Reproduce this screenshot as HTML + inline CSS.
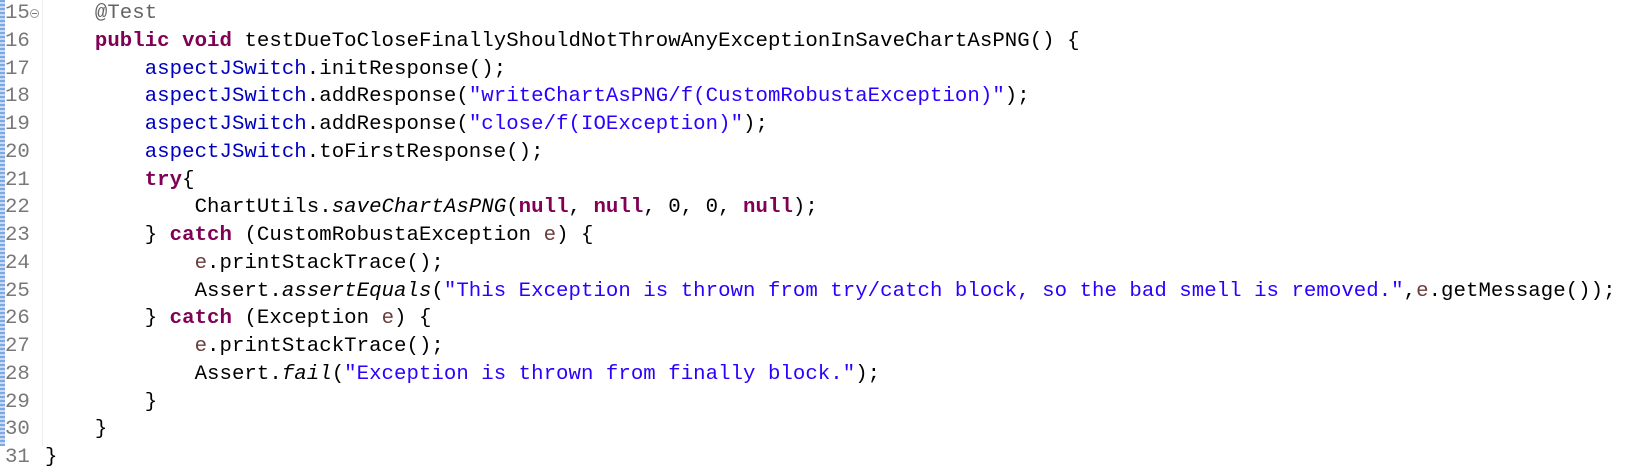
<!DOCTYPE html>
<html><head><style>
html,body{margin:0;padding:0;background:#fff;width:1631px;height:446px;overflow:hidden}
.strip{position:absolute;left:0;top:0;width:5px;height:446px;background:repeating-linear-gradient(0deg,#7fa8e0 0 2px,#c8daf5 2px 4px)}
.sep{position:absolute;left:42px;top:0;width:1px;height:446px;background:#eeeeee}
.code{position:absolute;left:0;top:0px;font-family:"Liberation Mono",monospace;font-size:20.7px;letter-spacing:0.05px;white-space:pre;color:#000}
.code div{height:27.75px;line-height:27.75px;position:relative}
.ln{display:inline-block;width:45px;color:#787878;padding-left:5px;box-sizing:border-box;position:relative;letter-spacing:0}
.k{color:#7f0055;font-weight:bold}.f{color:#0000c0}.s{color:#2a00ff}.a{color:#646464}.v{color:#6a3e3e}.i{font-style:italic}
.fold{position:absolute;left:30px;top:9px;width:9px;height:9px;border:1px solid #999;border-radius:50%;box-sizing:border-box}
.fold:after{content:"";position:absolute;left:1px;top:3px;width:5px;height:1px;background:#777}
</style></head><body>
<div class="strip"></div><div class="sep"></div>
<div class="code"><div><span class="ln">15<span class="fold"></span></span>    <span class="a">@Test</span></div><div><span class="ln">16</span>    <span class="k">public</span> <span class="k">void</span> testDueToCloseFinallyShouldNotThrowAnyExceptionInSaveChartAsPNG() {</div><div><span class="ln">17</span>        <span class="f">aspectJSwitch</span>.initResponse();</div><div><span class="ln">18</span>        <span class="f">aspectJSwitch</span>.addResponse(<span class="s">"writeChartAsPNG/f(CustomRobustaException)"</span>);</div><div><span class="ln">19</span>        <span class="f">aspectJSwitch</span>.addResponse(<span class="s">"close/f(IOException)"</span>);</div><div><span class="ln">20</span>        <span class="f">aspectJSwitch</span>.toFirstResponse();</div><div><span class="ln">21</span>        <span class="k">try</span>{</div><div><span class="ln">22</span>            ChartUtils.<span class="i">saveChartAsPNG</span>(<span class="k">null</span>, <span class="k">null</span>, 0, 0, <span class="k">null</span>);</div><div><span class="ln">23</span>        } <span class="k">catch</span> (CustomRobustaException <span class="v">e</span>) {</div><div><span class="ln">24</span>            <span class="v">e</span>.printStackTrace();</div><div><span class="ln">25</span>            Assert.<span class="i">assertEquals</span>(<span class="s">"This Exception is thrown from try/catch block, so the bad smell is removed."</span>,<span class="v">e</span>.getMessage());</div><div><span class="ln">26</span>        } <span class="k">catch</span> (Exception <span class="v">e</span>) {</div><div><span class="ln">27</span>            <span class="v">e</span>.printStackTrace();</div><div><span class="ln">28</span>            Assert.<span class="i">fail</span>(<span class="s">"Exception is thrown from finally block."</span>);</div><div><span class="ln">29</span>        }</div><div><span class="ln">30</span>    }</div><div><span class="ln">31</span>}</div></div>
</body></html>
